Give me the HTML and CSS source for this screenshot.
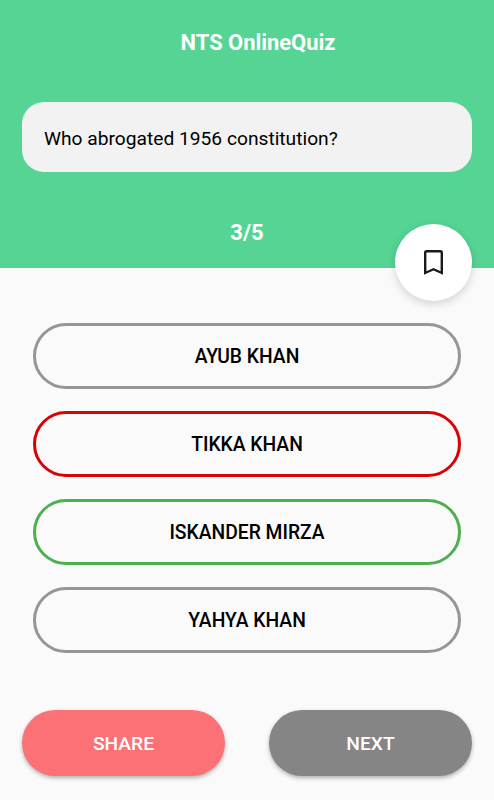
FILE: index.html
```html
<html>

<head>
  <meta charset="utf-8">
  <meta name="viewport" content="width=device-width, initial-scale=1">
  <title>NTS OnlineQuiz</title>
  <link rel="stylesheet" href="styles.css">
</head>

<body>
  <div class="header">
    <h1 class="title">NTS OnlineQuiz</h1>
    <p class="question">Who abrogated 1956 constitution?</p>
    <div class="progress">3/5</div>
    <button class="bookmark" aria-label="bookmark">
      <svg width="19" height="25" viewBox="0 0 19 25">
        <path d="M1.2 23V2.7Q1.2 1.2 2.7 1.2H16.3Q17.8 1.2 17.8 2.7V23L9.5 19.2Z" fill="none" stroke="#1a1a1a" stroke-width="2.4" />
      </svg>
    </button>
  </div>

  <div class="answers">
    <button class="answer">AYUB KHAN</button>
    <button class="answer wrong">TIKKA KHAN</button>
    <button class="answer correct">ISKANDER MIRZA</button>
    <button class="answer">YAHYA KHAN</button>
  </div>

  <div class="actions">
    <button class="action share">SHARE</button>
    <button class="action next">NEXT</button>
  </div>
</body>

</html>
```

FILE: styles.css
```css
* {
  box-sizing: border-box;
}

body {
  margin: 0;
  height: 800px;
  overflow: hidden;
  background-color: #fafafa;
  font-family: Roboto, sans-serif;
}

button {
  padding: 0;
  font-family: inherit;
}

.header {
  position: relative;
  height: 267.5px;
  padding: 28px 22px 0;
  background-color: #56d494;
}

.title,
.progress {
  margin: 0;
  color: white;
  font-size: 22px;
  font-weight: bold;
  line-height: 30px;
  text-align: center;
}

.title {
  padding-left: 22px;
  font-size: 21.9px;
}

.question {
  height: 70px;
  margin: 44.4px 0 45.6px;
  padding: 0 22px;
  border-radius: 22px;
  background-color: #f2f2f2;
  color: black;
  font-size: 19.2px;
  line-height: 73px;
}

/* floats over the bottom edge of the header */
.bookmark {
  position: absolute;
  right: 22px;
  bottom: -33.5px;
  display: flex;
  align-items: center;
  justify-content: center;
  width: 77px;
  height: 77px;
  border: none;
  border-radius: 50%;
  background-color: white;
  box-shadow: 0 3px 10px rgba(0, 0, 0, 0.16);
}

.answers {
  display: flex;
  flex-direction: column;
  gap: 22px;
  padding: 55px 33px 0;
}

.answer {
  height: 66px;
  padding-top: 2px;
  border: 3px solid #969696;
  border-radius: 33px;
  background-color: #fafafa;
  color: black;
  font-size: 19.3px;
  font-weight: 500;
}

.wrong {
  border-color: #d50505;
}

.correct {
  border-color: #4caf50;
}

.actions {
  display: flex;
  gap: 44px;
  padding: 57.5px 22px 0;
}

.action {
  flex: 1;
  height: 66px;
  border: none;
  border-radius: 33px;
  box-shadow: 0 2px 4px rgba(0, 0, 0, 0.3);
  color: white;
  font-size: 19.2px;
  font-weight: 500;
}

.share {
  background-color: #fb7176;
}

.next {
  background-color: #858585;
}
```
